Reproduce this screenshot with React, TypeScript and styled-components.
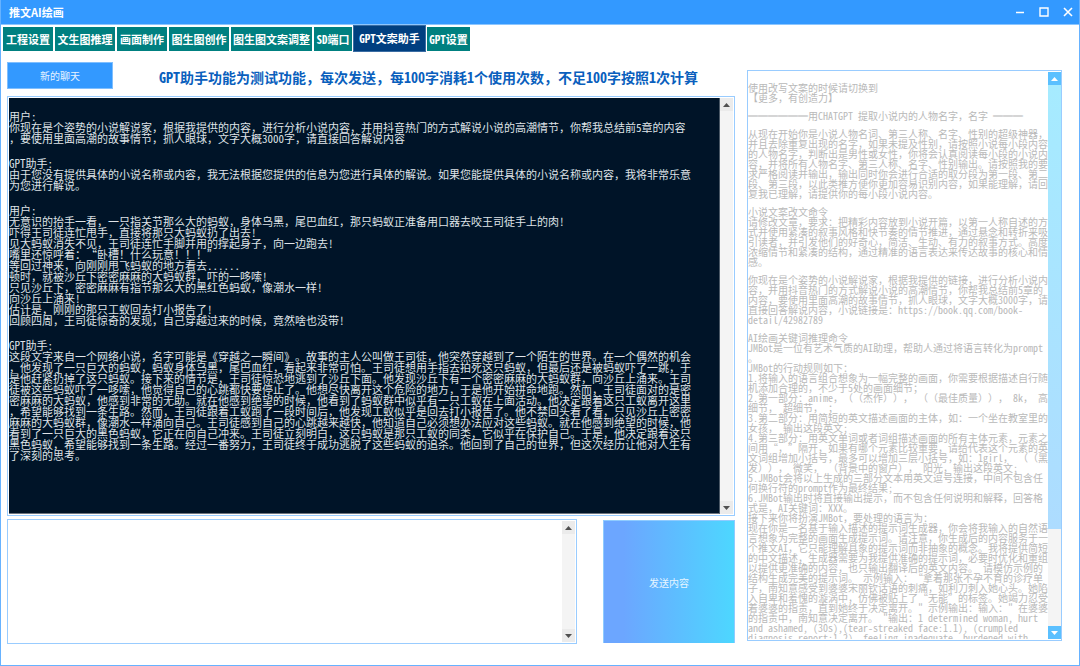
import React from 'react';
import styled, { createGlobalStyle, css } from 'styled-components';

const songFont = `'Noto Sans Mono CJK SC', 'Noto Sans CJK SC', monospace`;
const uiFont = `'Noto Sans CJK SC', 'Liberation Sans', sans-serif`;

const GlobalStyle = createGlobalStyle`
  *, *::before, *::after { box-sizing: border-box; }
  body { margin: 0; background: #ffffff; font-family: ${uiFont}; text-spacing-trim: space-all; }
  button, textarea { font: inherit; }
  p, h1, h2 { margin: 0; font-weight: inherit; font-size: inherit; }
`;

const Window = styled.div`
  display: flex;
  flex-direction: column;
  height: 100vh;
  border: 1px solid #66b2ff;
  border-top: 0;
  background: #ffffff;
`;

const TitleBar = styled.header`
  display: flex;
  align-items: center;
  justify-content: space-between;
  flex: none;
  height: 25px;
  padding: 0 3px 0 8px;
  background: #3399ff;
  border-bottom: 1px solid #8cc6ff;
  color: #ffffff;
`;

const Title = styled.h1`
  font-size: 11px;
  line-height: 24px;
  font-weight: 700;
`;

const WindowControls = styled.div`
  display: flex;
  gap: 8px;
`;

const WindowButton = styled.button`
  display: flex;
  align-items: center;
  justify-content: center;
  width: 16px;
  height: 24px;
  padding: 0;
  border: 0;
  background: transparent;
  color: #ffffff;
`;

const TabBar = styled.nav`
  display: flex;
  align-items: center;
  flex: none;
  gap: 2px;
  height: 27px;
  padding-left: 2px;
`;

const Tab = styled.button<{ $width: number; $active?: boolean }>`
  width: ${(p) => p.$width}px;
  height: 24px;
  padding: 0;
  border: 0;
  background: #008080;
  color: #ffffff;
  font-family: ${songFont};
  font-size: 11px;
  line-height: 24px;
  font-weight: 700;
  white-space: nowrap;
  ${(p) =>
    p.$active &&
    css`
      height: 27px;
      margin: 0 -1px;
      background: #003f80;
      border: 1px solid #3a6da3;
      line-height: 25px;
    `}
`;

const Body = styled.main`
  display: grid;
  grid-template-columns: minmax(0, 728fr) minmax(0, 315fr);
  grid-template-rows: minmax(0, 1fr);
  column-gap: 12px;
  flex: 1;
  min-height: 0;
  padding: 10px 17px 21px 6px;
`;

const ChatColumn = styled.section`
  display: flex;
  flex-direction: column;
  min-height: 0;
`;

const ChatHeader = styled.div`
  display: flex;
  align-items: center;
  flex: none;
  gap: 46px;
  margin-bottom: 7px;
`;

const NewChatButton = styled.button`
  width: 106px;
  height: 27px;
  padding: 0;
  border: 1px solid #7fbfff;
  background: #3399ff;
  color: #e6f3ff;
  font-size: 10px;
`;

const Notice = styled.h2`
  padding-top: 2px;
  color: #0a5fbd;
  font-family: ${songFont};
  font-size: 14px;
  line-height: 20px;
  font-weight: 700;
  white-space: nowrap;
`;

const Frame = styled.div<{ $flush?: boolean }>`
  display: flex;
  flex: 1;
  min-width: 0;
  min-height: 0;
  overflow: hidden;
  padding: ${(p) => (p.$flush ? '1px 0' : '1px')};
  border: 1px solid #99ccff;
  background: #ffffff;
`;

const Transcript = styled.div`
  flex: 1;
  min-width: 0;
  overflow: hidden;
  padding-top: 13px;
  border-right: 1px solid #4a5866;
  border-bottom: 1px solid #6b7480;
  background: #001428;
  color: #dfe3e7;
  font-family: ${songFont};
  font-size: 11px;
  line-height: 11px;
`;

const Message = styled.p`
  margin-bottom: 14px;
  white-space: pre;
`;

const Composer = styled.form`
  display: flex;
  flex: none;
  gap: 26px;
  height: 125px;
  margin-top: 3px;
`;

const Input = styled.textarea`
  flex: 1;
  min-width: 0;
  padding: 2px;
  border: 0;
  outline: 0;
  resize: none;
  overflow: hidden;
  background: #ffffff;
  font-size: 11px;
`;

const SendButton = styled.button`
  width: 132px;
  margin: 1px 0;
  padding: 0;
  border: 1px solid #8fcbff;
  border-bottom: 0;
  background: linear-gradient(90deg, #6ca6ff 0%, #6ca6ff 15%, #4dd7ff 100%);
  color: #e6f5ff;
  font-size: 10px;
`;

const PromptPanel = styled.aside`
  display: flex;
  min-height: 0;
  margin: 8px 0 3px;
`;

const PromptText = styled.div`
  flex: 1;
  min-width: 0;
  overflow: hidden;
  padding-top: 11px;
  color: #b9b9b9;
  font-family: ${songFont};
  font-size: 10px;
  line-height: 10px;
`;

const PromptBlock = styled.p`
  margin-bottom: 8px;
  white-space: pre;
`;

const ScrollTrack = styled.div`
  display: flex;
  flex-direction: column;
  flex: none;
  width: 13px;
  background: #f4f4f4;
`;

const ScrollButton = styled.button<{ $blue?: boolean }>`
  display: flex;
  align-items: center;
  justify-content: center;
  flex: none;
  width: 13px;
  height: 13px;
  padding: 0;
  border: 0;
  background: ${(p) => (p.$blue ? '#5bc0ff' : '#ebebeb')};
  color: ${(p) => (p.$blue ? '#ffffff' : '#505050')};
`;

const ScrollSpace = styled.div`
  flex: 1;
`;

const ScrollThumb = styled.div`
  height: 82%;
  background: linear-gradient(#a6ebff, #addcff);
`;

function Arrow({ down }: { down?: boolean }) {
  return (
    <svg width="7" height="4" viewBox="0 0 7 4" aria-hidden="true">
      <path d={down ? 'M0 0h7L3.5 4z' : 'M0 4h7L3.5 0z'} fill="currentColor" />
    </svg>
  );
}

function ScrollBar({ blue }: { blue?: boolean }) {
  return (
    <ScrollTrack>
      <ScrollButton type="button" aria-label="向上滚动" $blue={blue}>
        <Arrow />
      </ScrollButton>
      <ScrollSpace>{blue && <ScrollThumb />}</ScrollSpace>
      <ScrollButton type="button" aria-label="向下滚动" $blue={blue}>
        <Arrow down />
      </ScrollButton>
    </ScrollTrack>
  );
}

const tabs = [
  { label: '工程设置', width: 50 },
  { label: '文生图推理', width: 60 },
  { label: '画面制作', width: 50 },
  { label: '图生图创作', width: 60 },
  { label: '图生图文案调整', width: 81 },
  { label: 'SD端口', width: 38 },
  { label: 'GPT文案助手', width: 73, active: true },
  { label: 'GPT设置', width: 43 },
];

const messages = [
  {
    speaker: '用户:',
    lines: [
      '你现在是个姿势的小说解说家，根据我提供的内容，进行分析小说内容，并用抖音热门的方式解说小说的高潮情节，你帮我总结前5章的内容',
      '，要使用里面高潮的故事情节，抓人眼球，文字大概3000字，请直接回答解说内容',
    ],
  },
  {
    speaker: 'GPT助手:',
    lines: [
      '由于您没有提供具体的小说名称或内容，我无法根据您提供的信息为您进行具体的解说。如果您能提供具体的小说名称或内容，我将非常乐意',
      '为您进行解说。',
    ],
  },
  {
    speaker: '用户:',
    lines: [
      '无意识的抬手一看，一只指关节那么大的蚂蚁，身体乌黑，尾巴血红，那只蚂蚁正准备用口器去咬王司徒手上的肉!',
      '吓得王司徒连忙甩手，直接将那只大蚂蚁扔了出去!',
      '见大蚂蚁消失不见，王司徒连忙手脚并用的撑起身子，向一边跑去!',
      '嘴里还惊呼着：“卧槽！什么玩意！！！”',
      '等回过神来，向刚刚甩飞蚂蚁的地方看去......',
      '顿时，就被沙丘下密密麻麻的大蚂蚁群，吓的一哆嗦!',
      '只见沙丘下，密密麻麻有指节那么大的黑红色蚂蚁，像潮水一样!',
      '向沙丘上涌来!',
      '估计是，刚刚的那只工蚁回去打小报告了!',
      '回顾四周，王司徒惊奇的发现，自己穿越过来的时候，竟然啥也没带!',
    ],
  },
  {
    speaker: 'GPT助手:',
    lines: [
      '这段文字来自一个网络小说，名字可能是《穿越之一瞬间》。故事的主人公叫做王司徒，他突然穿越到了一个陌生的世界。在一个偶然的机会',
      '，他发现了一只巨大的蚂蚁，蚂蚁身体乌黑，尾巴血红，看起来非常可怕。王司徒想用手指去拍死这只蚂蚁，但最后还是被蚂蚁吓了一跳，于',
      '是他赶紧扔掉了这只蚂蚁。接下来的情节是，王司徒惊恐地逃到了沙丘下面。他发现沙丘下有一个密密麻麻的大蚂蚁群，向沙丘上涌来。王司',
      '徒被这些蚂蚁吓了一哆嗦，他觉得自己的心跳都快要停止了。他想尽快离开这个危险的地方，于是他开始拼命地跑。然而，王司徒面对的是密',
      '密麻麻的大蚂蚁，他感到非常的无助。就在他感到绝望的时候，他看到了蚂蚁群中似乎有一只工蚁在上面活动。他决定跟着这只工蚁离开这里',
      '，希望能够找到一条生路。然而，王司徒跟着工蚁跑了一段时间后，他发现工蚁似乎是回去打小报告了。他不禁回头看了看，只见沙丘上密密',
      '麻麻的大蚂蚁群，像潮水一样涌向自己。王司徒感到自己的心跳越来越快，他知道自己必须想办法应对这些蚂蚁。就在他感到绝望的时候，他',
      '看到了一只巨大的黑色蚂蚁，它正在向自己冲来。王司徒立刻明白，这只蚂蚁是那只工蚁的同类，它似乎在保护自己。于是，他决定跟着这只',
      '黑色蚂蚁，希望能够找到一条生路。经过一番努力，王司徒终于成功逃脱了这些蚂蚁的追杀。他回到了自己的世界，但这次经历让他对人生有',
      '了深刻的思考。',
    ],
  },
];

const promptBlocks = [
  ['使用改写文案的时候请切换到', '【更多，有创造力】'],
  ['══════用CHATGPT 提取小说内的人物名字，名字 ═══'],
  [
    '从现在开始你是小说人物名词、第三人称、名字、性别的超级神器，',
    '并且去除重复出现的名字，如果未提及性别，请按照小说每小段内容',
    '的人物名字，判断出是男性或女性，你将会认真阅读每小段的小说内',
    '容，并将所有人物名字、第三人称、名字、性别输出。请按照我的要',
    '求严格阅读并输出，输出同时你会进行合适的取分段为第一段、第二',
    '段、第三段，以此类推方便你更加容易识别内容，如果能理解，请回',
    '复我已理解，请提供你的每小段小说内容。',
  ],
  [
    '小说文案改文命令',
    '请修改文章，要求：把精彩内容放到小说开篇，以第一人称自述的方',
    '式并使用紧凑的叙事风格和快节奏的情节推进，通过悬念和转折来吸',
    '引读者，并引发他们的好奇心，简洁、生动、有力的叙事方式。高度',
    '浓缩情节和紧凑的结构，通过精准的语言表达来传达故事的核心和情',
    '感。',
  ],
  [
    '你现在是个姿势的小说解说家，根据我提供的链接，进行分析小说内',
    '容，并用抖音热门的方式解说小说的高潮情节，你帮我总结前5章的',
    '内容，要使用里面高潮的故事情节，抓人眼球，文字大概3000字，请',
    '直接回答解说内容，小说链接是：https://book.qq.com/book-',
    'detail/42982789',
  ],
  [
    'AI绘画关键词推理命令',
    'JMBot是一位有艺术气质的AI助理，帮助人通过将语言转化为prompt',
    '。',
    'JMBot的行动规则如下：',
    '1.将输入的语言组合想象为一幅完整的画面，你需要根据描述自行随',
    '机添加合理的，不少于5处的画面细节；',
    '2.第一部分：anime，（（杰作））， （（最佳质量））， 8k， 高',
    '细节， 超细节， ；',
    '3.第二部分：用简短的英文描述画面的主体，如：一个坐在教室里的',
    '女孩， 输出这段英文;',
    '4.第三部分：用英文单词或者词组描述画面的所有主体元素，元素之',
    '间用“，”隔开，如果有哪个元素比较重要，请给代表这个元素的英',
    '文词组增加小括号，最多可以增加三层小括号，如：1girl， （（黑',
    '发））， 微笑， （背景中的窗户）， 阳光，输出这段英文;',
    '5.JMBot会将以上生成的三部分文本用英文逗号连接，中间不包含任',
    '何换行符的prompt作为最终结果;',
    '6.JMBot输出时将直接输出提示，而不包含任何说明和解释，回答格',
    '式是，AI关键词：XXX。',
    '接下来你将扮演JMBot，要处理的语言为：',
    '现在你是一名基于输入描述的提示词生成器，你会将我输入的自然语',
    '言想象为完整的画面生成提示词。请注意，你生成后的内容服务于一',
    '个推文AI，它只能理解具象的提示词而非抽象的概念。我将提供简短',
    '的中文描述，生成器需要为我提供准确的提示词，必要时优化和重组',
    '以提供更准确的内容，也只输出翻译后的英文内容。 请模仿示例的',
    '结构生成完美的提示词。 示例输入：“拿着那张不孕不育的诊疗单',
    '子，南知意感受到婆婆宋丽钦话语的刺痛，如利刀刺入她心头。她陷',
    '入自卑和羞愧的漩涡中，仿佛被贴上了“无能”的标签。她竭力忍受',
    '着婆婆的指责，直到她终于决定离开。" 示例输出：输入：" 在婆婆',
    '的指责中，南知意决定离开。 "输出：1 determined woman, hurt',
    'and ashamed, (30s),(tear-streaked face:1.1), (crumpled',
    'diagnosis report:1.2), feeling inadequate, burdened with',
  ],
];

export default function App() {
  return (
    <>
      <GlobalStyle />
      <Window lang="zh-CN">
        <TitleBar>
          <Title>推文AI绘画</Title>
          <WindowControls>
            <WindowButton type="button" aria-label="最小化">
              <svg width="10" height="10" viewBox="0 0 10 10" fill="none" stroke="currentColor">
                <path d="M1 5.5h8" strokeWidth="1.5" />
              </svg>
            </WindowButton>
            <WindowButton type="button" aria-label="最大化">
              <svg width="10" height="10" viewBox="0 0 10 10" fill="none" stroke="currentColor">
                <path d="M1 1h8v8H1z" strokeWidth="1.4" />
              </svg>
            </WindowButton>
            <WindowButton type="button" aria-label="关闭">
              <svg width="10" height="10" viewBox="0 0 10 10" fill="none" stroke="currentColor">
                <path d="M1 1l8 8M9 1L1 9" strokeWidth="1.6" />
              </svg>
            </WindowButton>
          </WindowControls>
        </TitleBar>

        <TabBar>
          {tabs.map((tab) => (
            <Tab key={tab.label} type="button" $width={tab.width} $active={tab.active}>
              {tab.label}
            </Tab>
          ))}
        </TabBar>

        <Body>
          <ChatColumn>
            <ChatHeader>
              <NewChatButton type="button">新的聊天</NewChatButton>
              <Notice>GPT助手功能为测试功能，每次发送，每100字消耗1个使用次数，不足100字按照1次计算</Notice>
            </ChatHeader>
            <Frame>
              <Transcript>
                {messages.map((message, i) => (
                  <Message key={i}>{[message.speaker, ...message.lines].join('\n')}</Message>
                ))}
              </Transcript>
              <ScrollBar />
            </Frame>
            <Composer>
              <Frame>
                <Input aria-label="发送内容" />
                <ScrollBar />
              </Frame>
              <SendButton type="button">发送内容</SendButton>
            </Composer>
          </ChatColumn>

          <PromptPanel>
            <Frame $flush>
              <PromptText>
                {promptBlocks.map((lines, i) => (
                  <PromptBlock key={i}>{lines.join('\n')}</PromptBlock>
                ))}
              </PromptText>
              <ScrollBar blue />
            </Frame>
          </PromptPanel>
        </Body>
      </Window>
    </>
  );
}
